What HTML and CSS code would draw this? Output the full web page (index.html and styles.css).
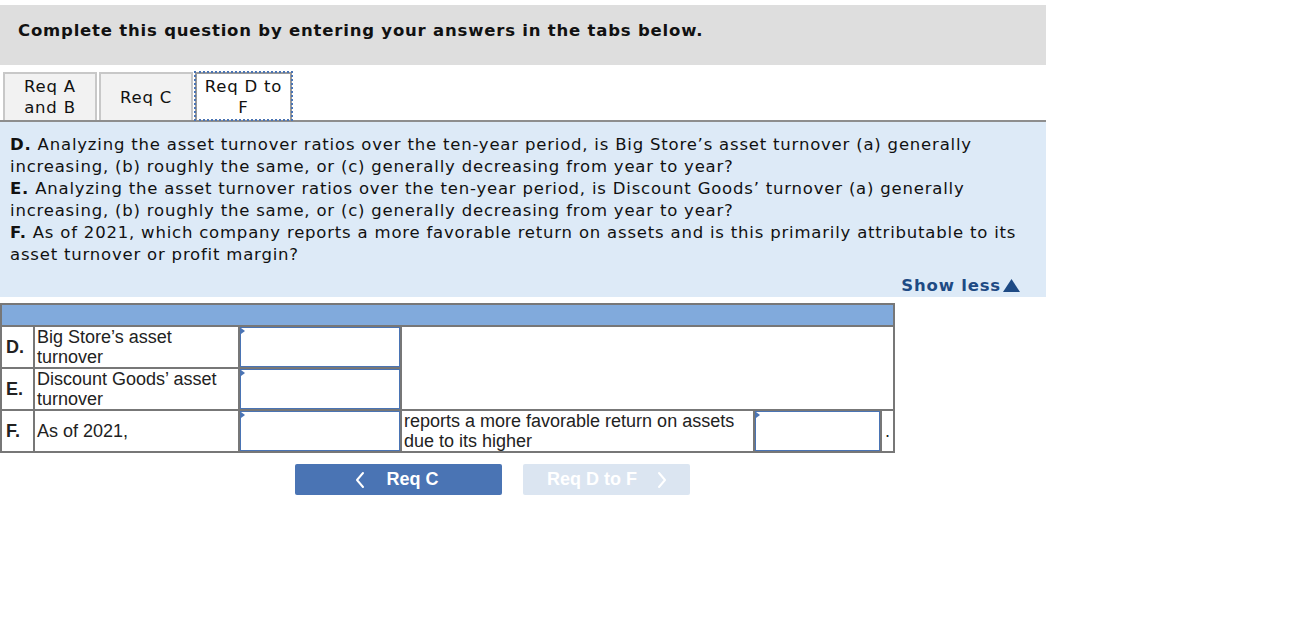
FILE: index.html
```html
<!DOCTYPE html>
<html>
<head>
<meta charset="utf-8">
<link rel="stylesheet" href="styles.css">
</head>
<body>
<div class="wrap">
  <div class="header">Complete this question by entering your answers in the tabs below.</div>
  <div class="tabs">
    <div class="tab">Req A<br>and B</div>
    <div class="tab">Req C</div>
    <div class="tab active">Req D to<br>F</div>
  </div>
  <div class="panel">
    <div class="q">
      <div class="ln"><b>D.</b> Analyzing the asset turnover ratios over the ten-year period, is Big Store’s asset turnover (a) generally</div>
      <div class="ln">increasing, (b) roughly the same, or (c) generally decreasing from year to year?</div>
      <div class="ln"><b>E.</b> Analyzing the asset turnover ratios over the ten-year period, is Discount Goods’ turnover (a) generally</div>
      <div class="ln">increasing, (b) roughly the same, or (c) generally decreasing from year to year?</div>
      <div class="ln"><b>F.</b> As of 2021, which company reports a more favorable return on assets and is this primarily attributable to its</div>
      <div class="ln">asset turnover or profit margin?</div>
    </div>
    <div class="showless">Show less<svg class="tri" width="17" height="13" viewBox="0 0 17 13"><path d="M8.5 0 L17 13 L0 13 Z" fill="#1e4a84"/></svg></div>
  </div>
  <table class="grid">
    <colgroup>
      <col class="c1"><col class="c2"><col class="c3"><col class="c4"><col class="c5"><col class="c6">
    </colgroup>
    <tr class="head"><td colspan="6"></td></tr>
    <tr class="row">
      <td class="let">D.</td>
      <td class="lbl">Big Store’s asset turnover</td>
      <td class="inp"><div class="box"></div></td>
      <td class="blank" colspan="3" rowspan="2"></td>
    </tr>
    <tr class="row">
      <td class="let">E.</td>
      <td class="lbl">Discount Goods’ asset turnover</td>
      <td class="inp"><div class="box"></div></td>
    </tr>
    <tr class="row">
      <td class="let">F.</td>
      <td class="lbl">As of 2021,</td>
      <td class="inp"><div class="box"></div></td>
      <td class="lbl">reports a more favorable return on assets due to its higher</td>
      <td class="inp"><div class="box"></div></td>
      <td class="dot">.</td>
    </tr>
  </table>
  <div class="nav">
    <div class="btn prev"><svg class="chev" width="12" height="18" viewBox="0 0 12 18"><path d="M9 2 L3 9 L9 16" fill="none" stroke="#fff" stroke-width="2" stroke-linecap="round" stroke-linejoin="round"/></svg><span>Req C</span></div>
    <div class="btn next"><span>Req D to F</span><svg class="chev" width="12" height="18" viewBox="0 0 12 18"><path d="M3 2 L9 9 L3 16" fill="none" stroke="#fff" stroke-width="2" stroke-linecap="round" stroke-linejoin="round"/></svg></div>
  </div>
</div>
</body>
</html>
```
FILE: styles.css
```css
html, body {
  margin: 0;
  padding: 0;
  background: #fff;
}
.wrap {
  width: 1046px;
  padding-top: 5px;
  font-family: "DejaVu Sans", Verdana, sans-serif;
  color: #111;
}
.header {
  background: #dedede;
  height: 60px;
  box-sizing: border-box;
  padding: 16px 0 0 18px;
  font-weight: bold;
  font-size: 16.5px;
  line-height: 20px;
  letter-spacing: 0.8px;
}
.tabs {
  display: flex;
  gap: 2px;
  padding: 7px 0 0 3px;
  border-bottom: 2px solid #8e8e8e;
  height: 48px;
}
.tab {
  width: 94px;
  box-sizing: border-box;
  height: 48px;
  background: #f2f2f2;
  border: 2px solid #c8c8c8;
  border-bottom: none;
  display: flex;
  align-items: center;
  justify-content: center;
  text-align: center;
  font-size: 16.5px;
  letter-spacing: 0.8px;
  line-height: 21px;
}
.tab.active {
  width: 97px;
  background: #fff;
  border: 2px solid #9a9a9a;
  border-bottom: none;
  outline: 2px dotted #4a74b4;
  outline-offset: -1px;
}
.panel {
  background: #ddeaf7;
  padding: 12px 0 0 10px;
  height: 175px;
  box-sizing: border-box;
  position: relative;
}
.q {
  font-size: 16.5px;
  letter-spacing: 0.8px;
  line-height: 22px;
}
.ln {
  white-space: nowrap;
}
.showless {
  position: absolute;
  right: 26px;
  bottom: 0;
  display: flex;
  align-items: center;
  gap: 2px;
  font-weight: bold;
  font-size: 16.5px;
  letter-spacing: 0.8px;
  color: #1e4a84;
  line-height: 22px;
}
.tri {
  display: block;
  margin-top: -1px;
}
.grid {
  margin-top: 6px;
  border-collapse: collapse;
  width: 893px;
  table-layout: fixed;
  font-family: "Liberation Sans", Arial, sans-serif;
  font-size: 18px;
  color: #222;
}
.c1 { width: 33px; }
.c2 { width: 205px; }
.c3 { width: 162px; }
.c4 { width: 353px; }
.c5 { width: 127px; }
.c6 { width: 13px; }
.grid td {
  border: 2px solid #777;
  padding: 0;
  vertical-align: middle;
}
.head td {
  background: #81aadc;
  height: 20px;
}
.row td {
  height: 40px;
}
.let {
  font-weight: bold;
  padding-left: 4px !important;
}
.lbl {
  padding-left: 2px !important;
  line-height: 20px;
}
.inp {
  position: relative;
}
.box {
  height: 40px;
  box-sizing: border-box;
  border: 1.5px solid #4a74b4;
  background: #fff;
  position: relative;
}
.box::before {
  content: "";
  position: absolute;
  left: 0;
  top: 0;
  border-left: 4px solid #4a74b4;
  border-top: 3px solid transparent;
  border-bottom: 3px solid transparent;
}
.blank { background: #fff; }
.dot {
  text-align: center;
  vertical-align: middle;
}
.nav {
  display: flex;
  gap: 21px;
  margin: 11px 0 0 295px;
}
.btn {
  height: 31px;
  border-radius: 2px;
  display: flex;
  align-items: center;
  justify-content: center;
  gap: 20px;
  font-family: "Liberation Sans", Arial, sans-serif;
  font-weight: bold;
  font-size: 18px;
  color: #fff;
}
.btn.prev {
  width: 207px;
  background: #4a74b4;
  padding-right: 4px;
  box-sizing: border-box;
}
.btn.next {
  width: 167px;
  background: #dbe5f1;
  gap: 19px;
  padding-left: 2px;
  box-sizing: border-box;
}
.chev { display: block; }
```
